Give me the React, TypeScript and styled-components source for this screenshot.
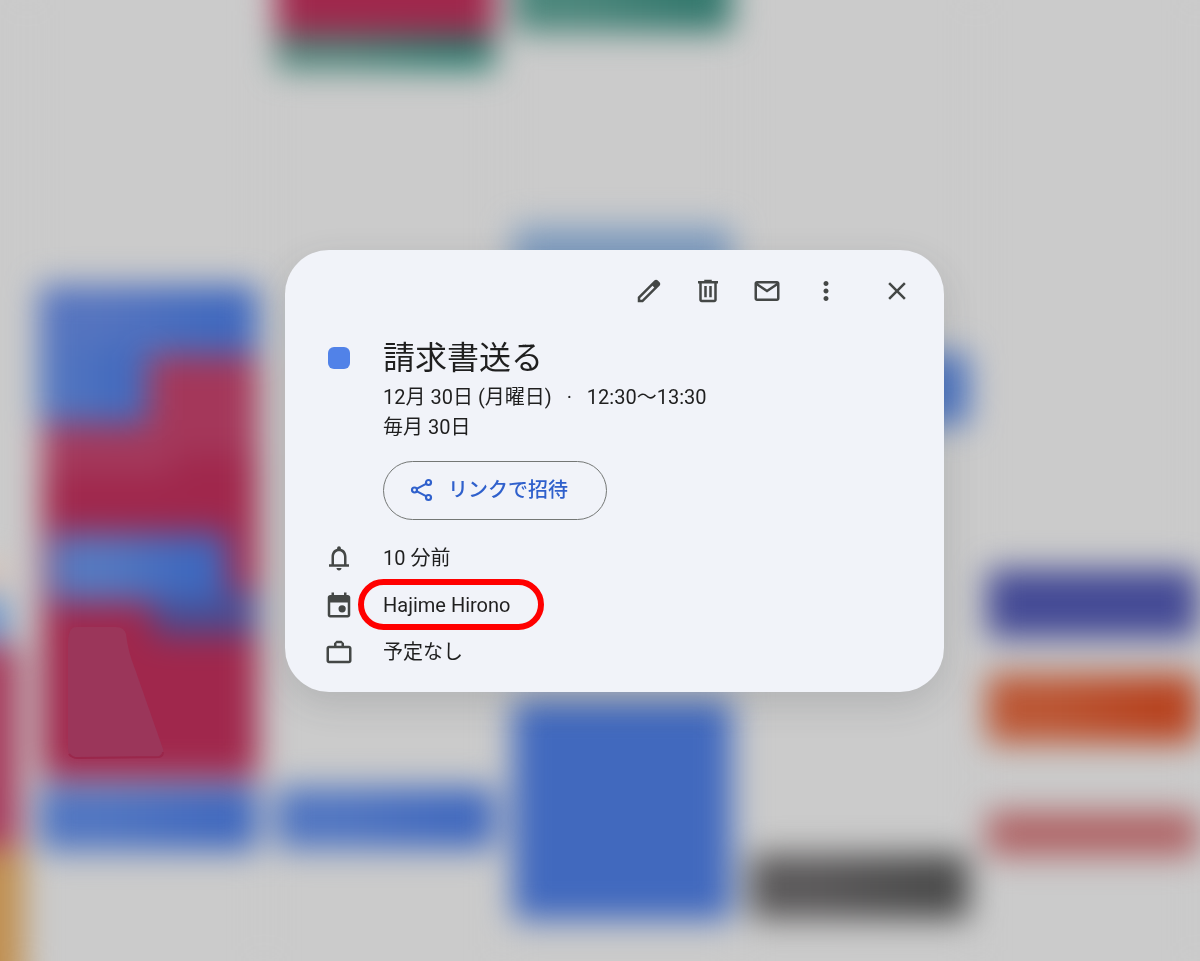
import React from "react";
import styled, { createGlobalStyle } from "styled-components";

const GlobalStyle = createGlobalStyle`
  *, *::before, *::after { box-sizing: border-box; }
  body {
    margin: 0;
    background: #cbcbcb;
    color: #1f1f1f;
    font-family: Roboto, "Noto Sans CJK JP", sans-serif;
    font-size: 20px;
    line-height: 30px;
  }
`;

const Page = styled.div`
  position: relative;
  min-height: 100vh;
  display: flex;
  align-items: center;
  justify-content: center;
  padding: 0 0 19px 29px;
  overflow: hidden;
`;

const Backdrop = styled.div`
  position: absolute;
  inset: 0;
  overflow: hidden;
`;

const Week = styled.div`
  position: absolute;
  inset: 0;
  display: grid;
  grid-template-columns: 28fr repeat(4, 237fr) 224fr;
  filter: blur(16px);
`;

const Day = styled.div`
  position: relative;
  border-right: 2px solid #c6c6c7;
`;

type Slot = {
  top: number;
  height: number;
  color: string;
  fade?: string;
  left?: number;
  right?: number;
};

const CalendarEvent = styled.div<{ $slot: Slot }>`
  position: absolute;
  top: ${(p) => p.$slot.top}px;
  height: ${(p) => p.$slot.height}px;
  left: ${(p) => p.$slot.left ?? 11}px;
  right: ${(p) => p.$slot.right ?? 5}px;
  border-radius: 6px;
  background: linear-gradient(
    90deg,
    ${(p) => p.$slot.fade ?? p.$slot.color} 30%,
    ${(p) => p.$slot.color} 80%
  );
`;

const Patch = styled.svg`
  position: absolute;
  top: 624px;
  left: 66px;
`;

const Card = styled.section`
  position: relative;
  width: 659px;
  max-width: 100%;
  padding: 21px 27px 17px 39px;
  border-radius: 44px;
  background: #f1f3f9;
  box-shadow: 0 12px 36px rgba(50, 54, 62, 0.16);
`;

const Toolbar = styled.div`
  display: flex;
  justify-content: flex-end;
  gap: 19px;
  margin-bottom: 27px;
`;

const IconButton = styled.button<{ $apart?: boolean }>`
  display: grid;
  place-items: center;
  width: 40px;
  height: 40px;
  margin-left: ${(p) => (p.$apart ? 12 : 0)}px;
  padding: 0;
  border: 0;
  border-radius: 50%;
  background: none;
  color: #444746;
  cursor: pointer;
`;

const Row = styled.div`
  display: grid;
  grid-template-columns: 30px 1fr;
  column-gap: 29px;
  justify-items: start;
`;

const DetailRow = styled(Row)`
  align-items: center;
  min-height: 47px;
  color: #1f1f1f;

  svg { color: #444746; }
`;

const Swatch = styled.span`
  width: 22px;
  height: 22px;
  margin: 9px 4px;
  border-radius: 6px;
  background: #5182e8;
`;

const Title = styled.h1`
  margin: 0 0 4px;
  font-size: 32px;
  font-weight: 400;
  line-height: 40px;
`;

const Line = styled.p`
  margin: 0;
`;

const Dot = styled.span`
  margin: 0 10px;
`;

const InviteButton = styled.button`
  display: flex;
  align-items: center;
  gap: 14px;
  height: 59px;
  margin: 19px 0 14px;
  padding: 0 38px 2px 26px;
  border: 1px solid #747775;
  border-radius: 30px;
  background: none;
  color: #2f60cc;
  font: inherit;
  font-weight: 500;
  cursor: pointer;
`;

const Circled = styled.span`
  position: relative;

  &::after {
    content: "";
    position: absolute;
    inset: -11px -34px -10px -25px;
    border: 6px solid #ff0000;
    border-radius: 26px;
    pointer-events: none;
  }
`;

const icons = {
  edit: "M20.41 4.94l-1.35-1.35c-.78-.78-2.05-.78-2.83 0L3 16.82V21h4.18L20.41 7.77c.79-.78.79-2.05 0-2.83zm-14 14.12L5 19v-1.36l9.82-9.82 1.41 1.41-9.82 9.83z",
  trash: "M15 4V3H9v1H4v2h1v13c0 1.1.9 2 2 2h10c1.1 0 2-.9 2-2V6h1V4h-5zm2 15H7V6h10v13zM9 8h2v9H9zm4 0h2v9h-2z",
  mail: "M20 4H4c-1.1 0-2 .9-2 2v12c0 1.1.9 2 2 2h16c1.1 0 2-.9 2-2V6c0-1.1-.9-2-2-2zm-.8 2L12 10.8 4.8 6h14.4zM4 18V7.87l8 5.33 8-5.33V18H4z",
  more: "M12 8c1.1 0 2-.9 2-2s-.9-2-2-2-2 .9-2 2 .9 2 2 2zm0 2c-1.1 0-2 .9-2 2s.9 2 2 2 2-.9 2-2-.9-2-2-2zm0 6c-1.1 0-2 .9-2 2s.9 2 2 2 2-.9 2-2-.9-2-2-2z",
  close: "M19 6.41L17.59 5 12 10.59 6.41 5 5 6.41 10.59 12 5 17.59 6.41 19 12 13.41 17.59 19 19 17.59 13.41 12z",
  bell: "M18 17v-6c0-3.07-1.63-5.64-4.5-6.32V4c0-.83-.67-1.5-1.5-1.5s-1.5.67-1.5 1.5v.68C7.64 5.36 6 7.92 6 11v6H4v2h16v-2h-2zm-2 0H8v-6c0-2.48 1.51-4.5 4-4.5s4 2.02 4 4.5v6zm-4 5c1.1 0 2-.9 2-2h-4c0 1.1.9 2 2 2z",
  calendar: "M19 4h-1V2h-2v2H8V2H6v2H5c-1.1 0-2 .9-2 2v14c0 1.1.9 2 2 2h14c1.1 0 2-.9 2-2V6c0-1.1-.9-2-2-2zm0 16H5V10h14v10zM14.500 12.100a2.900 2.900 0 1 0 0 5.800 2.900 2.900 0 0 0 0-5.800z",
  briefcase: "M20 7h-4V5l-2-2h-4L8 5v2H4c-1.1 0-2 .9-2 2v10c0 1.1.9 2 2 2h16c1.1 0 2-.9 2-2V9c0-1.1-.9-2-2-2zM10 5h4v2h-4V5zm10 14H4V9h16v10z",
};

function Icon({ name }: { name: keyof typeof icons }) {
  return (
    <svg width="30" height="30" viewBox="0 0 24 24" aria-hidden="true">
      <path d={icons[name]} fill="currentColor" fillRule="evenodd" />
    </svg>
  );
}

function ShareIcon() {
  return (
    <svg width="24" height="24" viewBox="0 0 24 24" fill="none" stroke="currentColor" strokeWidth="2.2" aria-hidden="true">
      <circle cx="18.500" cy="4.500" r="2.500" />
      <circle cx="4.500" cy="12" r="2.500" />
      <circle cx="18.500" cy="19.500" r="2.500" />
      <path d="M6.500 10.900L16.500 5.600M6.500 13.100L16.500 18.400" />
    </svg>
  );
}

const blue = "#4169be";
const paleBlue = "#5075c1";
const red = "#a0274c";

const days: Slot[][] = [
  [
    { top: 560, height: 30, left: -30, right: 22, color: "#d9bfb3" },
    { top: 598, height: 44, left: -30, right: 20, color: "#5d8ac8" },
    { top: 645, height: 203, left: -40, right: 7, color: "#a63b5c" },
    { top: 848, height: 160, left: -50, right: 2, color: "#c08f50" },
  ],
  [
    { top: 420, height: 358, left: 14, color: red },
    { top: 355, height: 100, left: 120, color: "#a4375a" },
    { top: 425, height: 50, left: 14, right: 90, color: "#a4395c" },
    { top: 285, height: 70, color: blue, fade: "#5574bf" },
    { top: 345, height: 79, right: 116, color: blue, fade: "#5174bf" },
    { top: 590, height: 45, left: 125, color: "#494b90" },
    { top: 533, height: 69, left: 22, right: 36, color: "#3e68be", fade: "#5679c0" },
    { top: 785, height: 66, color: blue, fade: paleBlue },
  ],
  [
    { top: -60, height: 130, color: "#2c7c6e", fade: "#4e867b" },
    { top: -60, height: 95, color: red },
    { top: 787, height: 62, color: blue, fade: paleBlue },
  ],
  [
    { top: -60, height: 92, color: "#35796e", fade: "#4b867b" },
    { top: 226, height: 60, color: "#809dc0" },
    { top: 700, height: 220, color: blue },
  ],
  [
    { top: 353, height: 72, color: "#4e75c1", fade: paleBlue },
    { top: 854, height: 65, color: "#4b4b4b", fade: "#5a5859" },
  ],
  [
    { top: 569, height: 69, right: 0, color: "#444a95" },
    { top: 674, height: 69, right: 0, color: "#b74320", fade: "#bb5634" },
    { top: 811, height: 45, right: 0, color: "#af6466" },
  ],
];

export default function App() {
  return (
    <>
      <GlobalStyle />
      <Page lang="ja">
        <Backdrop aria-hidden="true">
          <Week>
            {days.map((slots, day) => (
              <Day key={day}>
                {slots.map((slot, i) => (
                  <CalendarEvent key={i} $slot={slot} />
                ))}
              </Day>
            ))}
          </Week>
          <Patch width="100" height="136" viewBox="0 0 100 136">
            <path
              d="M10 3H50Q58 3 60 10Q62 28 69 45L97 125Q99 133 93 133L10 134Q2 134 2 125V20Q2 3 10 3Z"
              fill="#9b365a"
            />
            <path d="M3 130Q6 134 12 134L93 133Q97 132 97 128" fill="none" stroke="#9a274b" strokeWidth="2" />
          </Patch>
        </Backdrop>

        <Card role="dialog" aria-labelledby="event-title">
          <Toolbar>
            <IconButton aria-label="編集"><Icon name="edit" /></IconButton>
            <IconButton aria-label="削除"><Icon name="trash" /></IconButton>
            <IconButton aria-label="メール"><Icon name="mail" /></IconButton>
            <IconButton aria-label="オプション"><Icon name="more" /></IconButton>
            <IconButton aria-label="閉じる" $apart><Icon name="close" /></IconButton>
          </Toolbar>

          <Row>
            <Swatch />
            <div>
              <Title id="event-title">請求書送る</Title>
              <Line>12月 30日 (月曜日)<Dot> · </Dot>12:30～13:30</Line>
              <Line>毎月 30日</Line>
              <InviteButton>
                <ShareIcon />
                リンクで招待
              </InviteButton>
            </div>
          </Row>

          <DetailRow>
            <Icon name="bell" />
            <span>10 分前</span>
          </DetailRow>
          <DetailRow>
            <Icon name="calendar" />
            <Circled>Hajime Hirono</Circled>
          </DetailRow>
          <DetailRow>
            <Icon name="briefcase" />
            <span>予定なし</span>
          </DetailRow>
        </Card>
      </Page>
    </>
  );
}
